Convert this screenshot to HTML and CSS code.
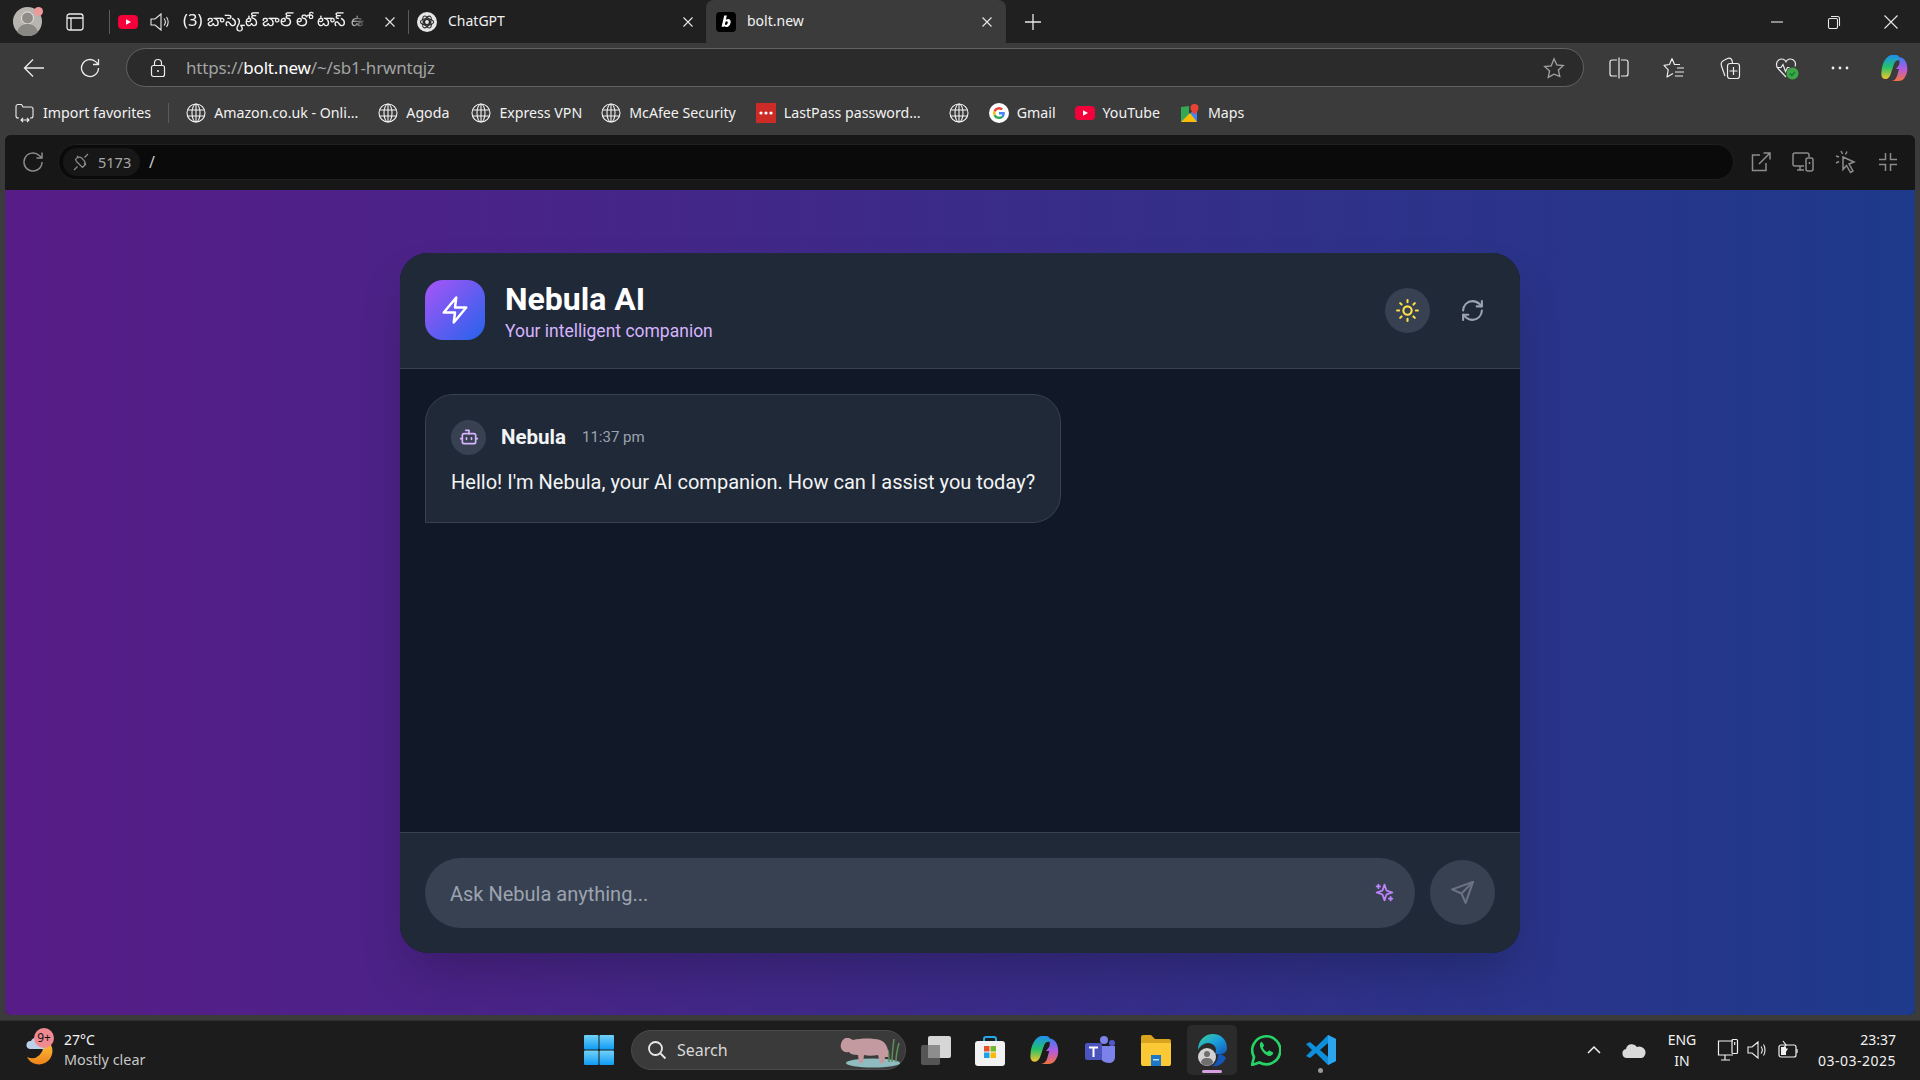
FILE: index.html
```html
<!DOCTYPE html>
<html lang="en">
<head>
<meta charset="utf-8">
<title>Nebula AI</title>
<link rel="stylesheet" href="styles.css">
</head>
<body>
<svg class="defs" width="0" height="0">
  <symbol id="globe" viewBox="0 0 20 20"><g fill="none" stroke="currentColor" stroke-width="1.1"><circle cx="10" cy="10" r="9"/><ellipse cx="10" cy="10" rx="4" ry="9"/><path d="M1.6 7h16.8M1.6 13h16.8M10 1v18"/></g></symbol>
  <symbol id="close" viewBox="0 0 12 12"><path d="M1.5 1.5l9 9M10.5 1.5l-9 9" stroke="currentColor" stroke-width="1.1" fill="none"/></symbol>
  <symbol id="yt" viewBox="0 0 20 14"><rect width="20" height="14" rx="4" fill="#f4003a"/><path d="M8 4.2l5 2.8-5 2.8z" fill="#fff"/></symbol>
  <defs>
    <linearGradient id="cp1" x1="0" y1="0" x2="0" y2="1"><stop offset="0" stop-color="#1d8ff0"/><stop offset=".5" stop-color="#23c16b"/><stop offset="1" stop-color="#f7c52c"/></linearGradient>
    <linearGradient id="cp2" x1="0" y1="0" x2="0" y2="1"><stop offset="0" stop-color="#3b7cf5"/><stop offset=".5" stop-color="#b45be0"/><stop offset="1" stop-color="#f4733d"/></linearGradient>
    <linearGradient id="edge" x1="0" y1="0" x2="1" y2="1"><stop offset="0" stop-color="#3ad48f"/><stop offset=".5" stop-color="#1a9fdd"/><stop offset="1" stop-color="#1457b8"/></linearGradient>
    <linearGradient id="winb" x1="0" y1="0" x2="0" y2="1"><stop offset="0" stop-color="#72d2f6"/><stop offset="1" stop-color="#0f9bf5"/></linearGradient>
    <linearGradient id="moon" x1="0" y1="0" x2="0" y2="1"><stop offset="0" stop-color="#fbc13f"/><stop offset="1" stop-color="#ee8217"/></linearGradient>
  </defs>
  <symbol id="copilot-shape" viewBox="0 0 28 28">
    <path d="M10 1h5c2 0 3 1 3.500 3l.5 2.500c-3-1-5 .5-6 3.500l-3 9c-1 4-3 6-5.500 6C1 25 0 22 .5 18 1 10 4 3 10 1z" fill="url(#cp1)"/>
    <path d="M17 3c4 0 7 2 8.500 6.500 1.500 5 1 10-1.500 13.500-1.500 3-4 4-7 4h-7c3 0 5-2 6-5l2-7h-3l3-4c1-3 .5-6-1-8z" fill="url(#cp2)"/>
  </symbol>
</svg>

<header class="tabstrip">
  <div class="avatar">
    <svg viewBox="0 0 29 29" width="29" height="29"><circle cx="14.5" cy="14.5" r="14.5" fill="#b8b5b0"/><circle cx="14.5" cy="11" r="6" fill="#8e8c89" stroke="#e6e4e0" stroke-width="1"/><path d="M4 25c2-6 6-8 10.500-8s8.500 2 10.500 8a14.500 14.500 0 0 1-21 0z" fill="#8a8885"/></svg>
    <span class="avatar-dot"></span>
  </div>
  <svg class="tabs-btn" viewBox="0 0 18 18" width="18" height="18" fill="none" stroke="#e8e8e8" stroke-width="1.3"><rect x="1" y="1" width="16" height="16" rx="2.500"/><path d="M1 5h16M5 5v12"/></svg>
  <span class="tab-div"></span>
  <div class="tab tab-yt">
    <svg width="20" height="14"><use href="#yt"/></svg>
    <svg class="speaker" viewBox="0 0 20 20" width="20" height="20" fill="none" stroke="#e8e8e8" stroke-width="1.100"><path d="M1 7h4l6-5v16l-6-5H1zM14 6.500c1.600 2 1.600 5 0 7M16.500 5c2 3 2 7 0 10"/></svg>
    <span class="tab-title telugu">(3) బాస్కెట్ బాల్ లో టాస్ ఉ</span>
    <svg class="tab-x" width="12" height="12"><use href="#close"/></svg>
  </div>
  <span class="tab-div tab-div-2"></span>
  <div class="tab tab-gpt">
    <svg viewBox="0 0 20 20" width="20" height="20"><circle cx="10" cy="10" r="10" fill="#e6e6e6"/><g fill="none" stroke="#222" stroke-width="1.100"><circle cx="10" cy="10" r="2.500"/><ellipse cx="10" cy="10" rx="6.500" ry="3.200"/><ellipse cx="10" cy="10" rx="6.500" ry="3.200" transform="rotate(60 10 10)"/><ellipse cx="10" cy="10" rx="6.500" ry="3.200" transform="rotate(120 10 10)"/></g></svg>
    <span class="tab-title">ChatGPT</span>
    <svg class="tab-x" width="12" height="12"><use href="#close"/></svg>
  </div>
  <div class="tab tab-active">
    <svg viewBox="0 0 20 20" width="20" height="20"><rect width="20" height="20" rx="4" fill="#000"/><path d="M8.200 3.500h2.600l-.9 4.300c.7-.5 1.400-.7 2.200-.7 1.900 0 2.900 1.400 2.500 3.700-.4 2.700-2 4.200-4.300 4.200-.9 0-1.700-.3-2.100-.9l-.2.700H5.600zM9.400 10l-.5 2.300c.2.400.7.600 1.100.6.900 0 1.500-.7 1.700-1.800.2-1.100-.2-1.800-1-1.800-.5 0-1 .3-1.300.7z" fill="#fff"/></svg>
    <span class="tab-title">bolt.new</span>
    <svg class="tab-x" width="12" height="12"><use href="#close"/></svg>
  </div>
  <svg class="new-tab" viewBox="0 0 18 18" width="18" height="18" stroke="#e8e8e8" stroke-width="1.300"><path d="M9 1v16M1 9h16"/></svg>
  <div class="win-controls">
    <svg viewBox="0 0 14 14" width="14" height="14" stroke="#e8e8e8" stroke-width="1.100"><path d="M1 7h12"/></svg>
    <svg viewBox="0 0 14 14" width="14" height="14" fill="none" stroke="#e8e8e8" stroke-width="1.100"><rect x="1.500" y="3.500" width="9" height="10" rx="1.500"/><path d="M4 1.500h6.500a2 2 0 0 1 2 2V11"/></svg>
    <svg viewBox="0 0 14 14" width="14" height="14" stroke="#e8e8e8" stroke-width="1.100"><path d="M.5.500l13 13M13.500.500l-13 13"/></svg>
  </div>
</header>

<nav class="toolbar">
  <svg class="tb-back" viewBox="0 0 22 20" width="22" height="20" fill="none" stroke="#ededed" stroke-width="1.300"><path d="M21 10H1.500M10 1.500L1.500 10l8.500 8.500"/></svg>
  <svg class="tb-reload" viewBox="0 0 20 20" width="20" height="20" fill="none" stroke="#ededed" stroke-width="1.300"><path d="M18.500 10a8.500 8.500 0 1 1-2.600-6.100L18.500 6.500M18.500 1v5.500H13"/></svg>
  <div class="urlbar">
    <svg viewBox="0 0 16 20" width="16" height="20" fill="none" stroke="#ededed" stroke-width="1.200"><rect x="1.500" y="7.500" width="13" height="11" rx="2"/><path d="M4.500 7.500V5a3.500 3.500 0 0 1 7 0v2.500"/><circle cx="8" cy="13" r="1" fill="#ededed" stroke="none"/></svg>
    <span class="url"><span class="url-dim">https://</span><span class="url-host">bolt.new</span><span class="url-dim">/~/sb1-hrwntqjz</span></span>
    <svg class="url-star" viewBox="0 0 22 22" width="22" height="22" fill="none" stroke="#a0a0a0" stroke-width="1.300"><path d="M11 1.800l2.800 6 6.500.7-4.900 4.400 1.400 6.500L11 17.100l-5.800 3.300 1.400-6.500-4.900-4.400 6.500-.7z"/></svg>
  </div>
  <div class="tb-actions">
    <svg viewBox="0 0 20 22" width="20" height="22" fill="none" stroke="#ededed" stroke-width="1.200"><path d="M10 .5v21M8 3H3a2 2 0 0 0-2 2v12a2 2 0 0 0 2 2h5M12 3h5a2 2 0 0 1 2 2v12a2 2 0 0 1-2 2h-5"/></svg>
    <svg viewBox="0 0 22 22" width="22" height="22" fill="none" stroke="#ededed" stroke-width="1.200" stroke-linejoin="round"><path d="M9 1.500L11.500 7.500H17M6.500 7.500L1 8.300l4.200 4.500L4 20l6-3.500M9 1.500L6.500 7.500M14 11h7M12 15h9M12 19h8"/></svg>
    <svg viewBox="0 0 22 24" width="22" height="24" fill="none" stroke="#ededed" stroke-width="1.200"><path d="M6 20L2.500 10c-1-3 .5-5 3-6l3-1.500c2-1 4 0 4.500 2L13.500 7"/><rect x="8.500" y="7.500" width="12" height="15" rx="2.500"/><path d="M14.500 11v8M10.500 15h8"/></svg>
    <svg viewBox="0 0 24 24" width="24" height="24" fill="none"><path d="M11 21L3.500 13C.5 10 1 5.500 4 3.800 7 2 9.800 3.500 11 5.800 12.200 3.500 15 2 18 3.800c2.500 1.500 3 4 2 6.700M1.500 11.500h4.500l2-3 2.500 7 2-4h2" stroke="#ededed" stroke-width="1.200"/><circle cx="17.500" cy="17.500" r="6" fill="#3fa648"/><path d="M14.800 17.500l2 2 3.200-3.600" stroke="#173" stroke-width="1.300"/></svg>
    <svg class="tb-dots" viewBox="0 0 20 6" width="20" height="6" fill="#ededed"><circle cx="3" cy="3" r="1.400"/><circle cx="10" cy="3" r="1.400"/><circle cx="17" cy="3" r="1.400"/></svg>
    <svg class="copilot" viewBox="0 0 28 28" width="28" height="28"><use href="#copilot-shape"/></svg>
  </div>
</nav>

<div class="bookmarks">
  <div class="bm bm-import">
    <svg viewBox="0 0 20 20" width="20" height="20" fill="none" stroke="#ededed" stroke-width="1.100"><path d="M4 15H3a2 2 0 0 1-2-2V3.500A2 2 0 0 1 3 1.500h3.500L8 4h8a2 2 0 0 1 2 2v7a2 2 0 0 1-2 2h-1M6 17h8M8 15l-2 2 2 2M12 15l2 2-2 2"/></svg>
    <span>Import favorites</span>
  </div>
  <span class="bm-sep"></span>
  <div class="bm bm-amazon"><svg width="20" height="20"><use href="#globe"/></svg><span>Amazon.co.uk - Onli...</span></div>
  <div class="bm bm-agoda"><svg width="20" height="20"><use href="#globe"/></svg><span>Agoda</span></div>
  <div class="bm bm-vpn"><svg width="20" height="20"><use href="#globe"/></svg><span>Express VPN</span></div>
  <div class="bm bm-mcafee"><svg width="20" height="20"><use href="#globe"/></svg><span>McAfee Security</span></div>
  <div class="bm bm-lastpass"><svg viewBox="0 0 20 20" width="20" height="20"><rect width="20" height="20" fill="#cc2b26"/><g fill="#fff"><circle cx="5" cy="10" r="1.600"/><circle cx="10" cy="10" r="1.600"/><circle cx="15" cy="10" r="1.600"/></g></svg><span>LastPass password...</span></div>
  <div class="bm bm-blank"><svg width="20" height="20"><use href="#globe"/></svg></div>
  <div class="bm bm-gmail"><svg viewBox="0 0 20 20" width="20" height="20"><circle cx="10" cy="10" r="10" fill="#fff"/><path d="M15.800 10.200c0-.5 0-.9-.1-1.300H10v2.500h3.300a2.800 2.800 0 0 1-1.200 1.800l1.900 1.500c1.100-1 1.800-2.600 1.800-4.500z" fill="#4285f4"/><path d="M10 16c1.600 0 3-.5 4-1.500l-1.900-1.500c-.5.400-1.200.6-2.100.6-1.600 0-2.900-1-3.400-2.400l-2 1.500A6 6 0 0 0 10 16z" fill="#34a853"/><path d="M6.600 11.200a3.600 3.600 0 0 1 0-2.300l-2-1.500a6 6 0 0 0 0 5.300z" fill="#fbbc05"/><path d="M10 6.400c.9 0 1.700.3 2.300.9l1.700-1.700A6 6 0 0 0 4.600 7.400l2 1.500C7.100 7.500 8.400 6.400 10 6.400z" fill="#ea4335"/></svg><span>Gmail</span></div>
  <div class="bm bm-youtube"><svg width="20" height="14"><use href="#yt"/></svg><span>YouTube</span></div>
  <div class="bm bm-maps"><svg viewBox="0 0 20 20" width="20" height="20"><path d="M1 4l8-1v16H1z" fill="#34a853"/><path d="M1 19L17 4v15z" fill="#4285f4"/><path d="M1 19L10 10l7 9z" fill="#fbbc05"/><path d="M14.500 1a4 4 0 0 0-4 4c0 3 4 6.500 4 6.500s4-3.500 4-6.500a4 4 0 0 0-4-4z" fill="#ea4335"/></svg><span>Maps</span></div>
</div>

<div class="workspace">
  <div class="panel">
    <div class="panel-bar">
      <svg class="pb-reload" viewBox="0 0 22 22" width="22" height="22" fill="none" stroke="#8c8c8c" stroke-width="1.500"><path d="M20 11a9 9 0 1 1-2.800-6.500L20 7M20 1.500V7h-5.500"/></svg>
      <div class="pb-address">
        <div class="pb-port">
          <svg viewBox="0 0 16 18" width="16" height="18" fill="none" stroke="#8c8c8c" stroke-width="1.200"><path d="M1 17l3.500-3.500M15 1l-3.500 3.500M3.500 8.500l6 6 1.500-1.500c1.500-1.500 1.500-3.500.5-5L8.500 4.800c-1.500-1-3.500-1-5 .5L2.500 6.500zM6 5l-2-2M13 12l-2-2"/></svg>
          <span>5173</span>
        </div>
        <span class="pb-path">/</span>
      </div>
      <div class="pb-actions">
        <svg viewBox="0 0 20 20" width="20" height="20" fill="none" stroke="#8c8c8c" stroke-width="1.500"><path d="M9 3H1.500v15.500H15V11M8 12L19 1M12.500 1H19v6.500"/></svg>
        <svg viewBox="0 0 22 20" width="22" height="20" fill="none" stroke="#8c8c8c" stroke-width="1.500"><path d="M12 14H3a2 2 0 0 1-2-2V3a2 2 0 0 1 2-2h12a2 2 0 0 1 2 2v2M5 18h7M8 14v4"/><rect x="14" y="6" width="7" height="13" rx="2"/><path d="M17.500 10v2"/></svg>
        <svg viewBox="0 0 22 24" width="22" height="24" fill="none" stroke="#8c8c8c" stroke-width="1.500"><path d="M8 7l11 5-5 2 4 7-2.500 1.500-4-7-3.500 4zM6 1l1.500 3M1 6l3 1M12 1.500l-1.500 3M1 13l3-1.500"/></svg>
        <svg viewBox="0 0 20 20" width="20" height="20" fill="none" stroke="#8c8c8c" stroke-width="1.500"><path d="M7.500 1v6.500H1M12.500 1v6.500H19M7.500 19v-6.500H1M12.500 19v-6.500H19"/></svg>
      </div>
    </div>

    <main class="preview">
      <section class="card">
        <header class="card-head">
          <div class="logo">
            <svg viewBox="0 0 24 24" width="30" height="30" fill="none" stroke="#fff" stroke-width="2" stroke-linecap="round" stroke-linejoin="round"><polygon points="13 2 3 14 12 14 11 22 21 10 12 10 13 2"/></svg>
          </div>
          <div class="brand">
            <h1>Nebula AI</h1>
            <p>Your intelligent companion</p>
          </div>
          <div class="head-actions">
            <button class="icon-btn theme-btn" type="button" aria-label="Theme">
              <svg viewBox="0 0 24 24" width="25" height="25" fill="none" stroke="#fde047" stroke-width="2" stroke-linecap="round"><circle cx="12" cy="12" r="4"/><path d="M12 2v2M12 20v2M4.930 4.930l1.410 1.410M17.660 17.660l1.410 1.410M2 12h2M20 12h2M6.340 17.660l-1.410 1.410M19.070 4.930l-1.410 1.410"/></svg>
            </button>
            <button class="icon-btn" type="button" aria-label="Reset">
              <svg viewBox="0 0 24 24" width="25" height="25" fill="none" stroke="#9ca3af" stroke-width="2" stroke-linecap="round" stroke-linejoin="round"><path d="M3 12a9 9 0 0 1 9-9 9.750 9.750 0 0 1 6.740 2.740L21 8"/><path d="M21 3v5h-5"/><path d="M21 12a9 9 0 0 1-9 9 9.750 9.750 0 0 1-6.740-2.740L3 16"/><path d="M8 16H3v5"/></svg>
            </button>
          </div>
        </header>

        <div class="messages">
          <article class="bubble">
            <div class="bubble-head">
              <span class="bot-avatar">
                <svg viewBox="0 0 24 24" width="20" height="20" fill="none" stroke="#d8b4fe" stroke-width="2" stroke-linecap="round" stroke-linejoin="round"><path d="M12 8V4H8"/><rect x="4" y="8" width="16" height="12" rx="2"/><path d="M2 14h2M20 14h2M15 13v2M9 13v2"/></svg>
              </span>
              <strong class="bot-name">Nebula</strong>
              <time class="bot-time">11:37 pm</time>
            </div>
            <p class="bubble-text">Hello! I'm Nebula, your AI companion. How can I assist you today?</p>
          </article>
        </div>

        <footer class="composer">
          <div class="prompt">
            <input class="prompt-input" type="text" placeholder="Ask Nebula anything...">
            <svg viewBox="0 0 24 24" width="21" height="21" fill="none" stroke="#c084fc" stroke-width="2" stroke-linecap="round" stroke-linejoin="round"><path d="m12 3-1.912 5.813a2 2 0 0 1-1.275 1.275L3 12l5.813 1.912a2 2 0 0 1 1.275 1.275L12 21l1.912-5.813a2 2 0 0 1 1.275-1.275L21 12l-5.813-1.912a2 2 0 0 1-1.275-1.275L12 3Z"/><path d="M5 3v4M19 17v4M3 5h4M17 19h4"/></svg>
          </div>
          <button class="send-btn" type="button" aria-label="Send">
            <svg viewBox="0 0 24 24" width="25" height="25" fill="none" stroke="#6b7280" stroke-width="2" stroke-linecap="round" stroke-linejoin="round"><path d="m22 2-7 20-4-9-9-4Z"/><path d="M22 2 11 13"/></svg>
          </button>
        </footer>
      </section>
    </main>
  </div>
</div>

<footer class="taskbar">
  <div class="weather">
    <div class="weather-icon">
      <svg viewBox="0 0 30 32" width="30" height="32"><path d="M17 9a11 11 0 0 1-15 14 13 13 0 0 0 24-12 10 10 0 0 0-9-2z" fill="url(#moon)"/><path d="M5 15a4 4 0 0 1 1-8 6 6 0 0 1 11 0 4 4 0 0 1 1 8z" fill="#bcd0ea"/></svg>
      <span class="badge">9+</span>
    </div>
    <div class="weather-text"><span>27°C</span><span class="weather-sub">Mostly clear</span></div>
  </div>
  <svg class="start" viewBox="0 0 30 30" width="30" height="30"><g fill="url(#winb)"><rect width="14.500" height="14.500" rx="1"/><rect x="15.500" width="14.500" height="14.500" rx="1"/><rect y="15.500" width="14.500" height="14.500" rx="1"/><rect x="15.500" y="15.500" width="14.500" height="14.500" rx="1"/></g></svg>
  <div class="search">
    <svg viewBox="0 0 20 20" width="20" height="20" fill="none" stroke="#e8e8e8" stroke-width="1.800"><circle cx="8.500" cy="8.500" r="6.500"/><path d="M13.500 13.500l5 5"/></svg>
    <span>Search</span>
    <svg class="hippo" viewBox="0 0 62 36" width="62" height="36"><ellipse cx="34" cy="31" rx="27" ry="4.500" fill="#8fbcc0"/><path d="M53 30c0-8 1-15 2-23M57 30c0-6 1-12 3-19M50 30c0-4 0-8-1-12" stroke="#5f8f5a" stroke-width="1.500" fill="none"/><path d="M10 6l4 2c8-2 20-2 27 0 6 2 9 8 8 17h-3l-1 6h-4l-2-8c-5 1-10 1-14 0l-1 8h-4l-1-8c-5 0-8-1-9-3-4 1-7-1-8-4-1-4 1-9 5-10z" fill="#c39aa0"/></svg>
  </div>
  <div class="tray-apps">
    <svg class="app-task" viewBox="0 0 32 32" width="32" height="32"><rect x="1" y="11" width="19" height="20" rx="2" fill="#555"/><rect x="8" y="2" width="23" height="22" rx="2" fill="#d6d6d6"/><rect x="8" y="11" width="12" height="13" fill="#8d8d8d"/></svg>
    <svg class="app" viewBox="0 0 30 32" width="30" height="32"><path d="M9 8V5a2 2 0 0 1 2-2h8a2 2 0 0 1 2 2v3" fill="none" stroke="#25a7ee" stroke-width="2"/><rect y="7" width="30" height="25" rx="3" fill="#f2f2f2"/><rect x="9" y="12" width="5.500" height="5.500" fill="#e8502c"/><rect x="15.500" y="12" width="5.500" height="5.500" fill="#72b82a"/><rect x="9" y="18.500" width="5.500" height="5.500" fill="#1ba1e8"/><rect x="15.500" y="18.500" width="5.500" height="5.500" fill="#fbb805"/></svg>
    <svg class="app" viewBox="0 0 28 28" width="30" height="30"><use href="#copilot-shape"/></svg>
    <svg class="app" viewBox="0 0 30 32" width="30" height="32"><circle cx="19" cy="6" r="4" fill="#7b83eb"/><circle cx="27" cy="9" r="3" fill="#5059c9"/><path d="M15 12h15v11c0 4-3 6-6 6-5 0-9-3-9-8z" fill="#7b83eb"/><rect y="9" width="17" height="17" rx="2" fill="#4b53bc"/><path d="M4 12.500h9v2H9.500V23h-2v-8.500H4z" fill="#fff"/></svg>
    <svg class="app" viewBox="0 0 32 32" width="32" height="32"><path d="M1 3a2 2 0 0 1 2-2h8l4 4h14a2 2 0 0 1 2 2v4H1z" fill="#d9a41d"/><path d="M1 9h30v21a2 2 0 0 1-2 2H3a2 2 0 0 1-2-2z" fill="#fbc935"/><rect x="11" y="21" width="10" height="11" fill="#1d77c8"/><rect x="13" y="25" width="6" height="1.500" fill="#bfe0f5"/></svg>
    <div class="app-active">
      <svg viewBox="0 0 32 34" width="32" height="34"><path d="M2 17C2 7 9 1 17 1c8 0 14 6 14 14 0 4-3 6-7 6h-5c3-6-1-11-7-11-4 0-8 3-10 7z" fill="url(#edge)"/><path d="M22 21c1 5-3 11-6 12 6 1 11-2 14-8-2-3-5-4-8-4z" fill="#1457b8"/><circle cx="11" cy="24" r="9" fill="#d2d2d2"/><circle cx="11" cy="21" r="3" fill="#6f6f6f"/><path d="M5 30c0-4 3-5 6-5s6 1 6 5a8 8 0 0 1-12 0z" fill="#6f6f6f"/></svg>
      <span class="active-bar"></span>
    </div>
    <svg class="app" viewBox="0 0 30 32" width="30" height="32"><path d="M1 31l2-8A14 14 0 1 1 8.500 28.500z" fill="none" stroke="#25d366" stroke-width="2.600"/><path d="M10 8c-2 2-1.500 6 2 10 3 3.500 6.500 5 9 3 1-.8 1.500-2 1-2.500l-3.500-2c-.5-.2-1 0-1.500 1-.5.6-1 .6-2 0-1.500-1-2.500-2.500-3-3.500-.3-.8.300-1.200 1-2 .3-.5.200-1-2-4-.3-.4-1-.4-1 .5z" fill="#25d366"/></svg>
    <div class="app-vs">
      <svg viewBox="0 0 30 32" width="30" height="32"><path d="M22 1l8 4v22l-8 4-12-12-6 5-4-2 6-6-6-6 4-2 6 5z" fill="#0e8fdc"/><path d="M22 9l-8 7 8 7z" fill="#1c1c1c"/><path d="M22 1l8 4v22l-8 4z" fill="#2aa5ee"/></svg>
      <span class="vs-dot"></span>
    </div>
  </div>
  <div class="systray">
    <svg viewBox="0 0 16 10" width="16" height="10" fill="none" stroke="#f0f0f0" stroke-width="1.500"><path d="M2 8l6-6 6 6"/></svg>
    <svg class="tray-cloud" viewBox="0 0 24 18" width="24" height="18" fill="#dadada"><path d="M5 17a4.500 4.500 0 0 1-1-8.900 6 6 0 0 1 11-2A5 5 0 0 1 20 17z"/></svg>
    <div class="lang"><span>ENG</span><span>IN</span></div>
    <svg class="tray-net" viewBox="0 0 22 24" width="22" height="24" fill="none" stroke="#f0f0f0" stroke-width="1.200"><path d="M16 3H1.500v14H16M8 17v5M4 22h9"/><rect x="15" y="1.500" width="5.500" height="14" rx="1"/><path d="M17.700 4v3"/></svg>
    <svg class="tray-sound" viewBox="0 0 20 20" width="20" height="20" fill="none" stroke="#f0f0f0" stroke-width="1.100"><path d="M1 7h4l6-5v16l-6-5H1zM14 6.500c1.500 2 1.500 5 0 7M16.500 4.500c2 3 2 8 0 11"/></svg>
    <svg class="tray-batt" viewBox="0 0 22 20" width="22" height="20" fill="none" stroke="#f0f0f0" stroke-width="1.200"><rect x="1" y="5" width="17" height="12" rx="2"/><path d="M19 9v4M5 1l3 4-3 4h4l-3 5"/><rect x="3" y="7" width="5" height="8" fill="#f0f0f0" stroke="none"/></svg>
    <div class="clock"><span>23:37</span><span class="clock-date">03-03-2025</span></div>
  </div>
</footer>
</body>
</html>
```
FILE: styles.css
```css
* { box-sizing: border-box; }
html, body { margin: 0; padding: 0; }
body {
  width: 1920px;
  height: 1080px;
  overflow: hidden;
  display: flex;
  flex-direction: column;
  background: #3b3b3b;
  font-family: "Noto Sans", "Open Sans", sans-serif;
  color: #f2f2f2;
}
.defs { position: absolute; }
svg { display: block; flex: none; }
h1, p { margin: 0; }

/* Tab strip */
.tabstrip {
  height: 43px;
  background: #202020;
  display: flex;
  align-items: center;
  padding-left: 13px;
  flex: none;
}
.avatar { position: relative; width: 29px; height: 29px; }
.avatar-dot {
  position: absolute;
  top: 0; right: -1px;
  width: 9px; height: 9px;
  border-radius: 50%;
  background: #ee9a9a;
}
.tabs-btn { margin-left: 24px; }
.tab-div { width: 1px; height: 24px; background: #5a5a5a; margin-left: 25px; }
.tab-div-2 { margin-left: 12px; }
.tab {
  height: 43px;
  display: flex;
  align-items: center;
  font-size: 14px;
  position: relative;
}
.tab-title { white-space: nowrap; overflow: hidden; margin-bottom: 2px; }
.tab-x { color: #e8e8e8; flex: none; }
.tab-yt { width: 278px; margin-left: 8px; }
.speaker { margin-left: 12px; }
.telugu {
  width: 185px;
  margin-left: 13px;
  margin-right: 16px;
  font-size: 16.5px;
  -webkit-mask-image: linear-gradient(to right, #000 88%, transparent);
  mask-image: linear-gradient(to right, #000 88%, transparent);
}
.tab-gpt { width: 289px; margin-left: 8px; }
.tab-gpt .tab-title { margin-left: 11px; width: 234px; }
.tab-active {
  width: 300px;
  padding-left: 10px;
  background: #3b3b3b;
  border-radius: 8px 8px 0 0;
}
.tab-active .tab-title { margin-left: 11px; width: 234px; }
.new-tab { margin-left: 18px; }
.win-controls {
  margin-left: auto;
  padding-right: 22px;
  display: flex;
  gap: 43px;
  align-items: center;
}

/* Toolbar */
.toolbar {
  height: 49px;
  flex: none;
  display: flex;
  align-items: center;
  padding-left: 23px;
}
.tb-reload { margin-left: 35px; }
.urlbar {
  margin-left: 26px;
  width: 1458px;
  height: 39px;
  background: #2b2b2b;
  border: 1px solid #626262;
  border-radius: 20px;
  display: flex;
  align-items: center;
  padding-left: 23px;
  padding-right: 18px;
}
.url { margin-left: 20px; font-size: 17px; letter-spacing: -.17px; white-space: nowrap; }
.url-dim { color: #a2a2a2; }
.url-host { color: #fff; }
.url-star { margin-left: auto; }
.tb-actions {
  margin-left: 25px;
  display: flex;
  align-items: center;
  gap: 34px;
}
.tb-dots { margin-left: -3px; }
.copilot { margin-left: -3px; }

/* Bookmarks */
.bookmarks {
  height: 43px;
  flex: none;
  display: flex;
  align-items: center;
  padding: 0 0 2px 15px;
  font-size: 14.2px;
}
.bm { display: flex; align-items: center; gap: 8px; white-space: nowrap; }
.bm-sep { width: 1px; height: 20px; background: #5a5a5a; margin-left: 17px; }
.bm-amazon { margin-left: 17px; }
.bm-agoda { margin-left: 20px; }
.bm-vpn { margin-left: 22px; }
.bm-mcafee { margin-left: 19px; }
.bm-lastpass { margin-left: 20px; }
.bm-blank { margin-left: 28px; }
.bm-gmail { margin-left: 20px; }
.bm-youtube { margin-left: 19px; }
.bm-maps { margin-left: 20px; }

/* Workspace */
.workspace {
  flex: 1;
  min-height: 0;
  padding: 0 5px 5px;
  display: flex;
}
.panel {
  flex: 1;
  display: flex;
  flex-direction: column;
  border-radius: 6px;
  overflow: hidden;
  background: #171717;
}
.panel-bar {
  height: 55px;
  flex: none;
  display: flex;
  align-items: center;
  padding: 0 0 1px 17px;
  background: #171717;
}
.pb-address {
  margin-left: 14px;
  width: 1676px;
  height: 36px;
  background: #0a0a0a;
  border: 1px solid #202020;
  border-radius: 18px;
  display: flex;
  align-items: center;
  padding-left: 4px;
}
.pb-port {
  height: 28px;
  width: 77px;
  border-radius: 14px;
  background: #171717;
  display: flex;
  align-items: center;
  gap: 9px;
  padding-left: 10px;
  color: #a8a8a8;
  font-size: 14.5px;
}
.pb-path { margin-left: 9px; color: #c8c8c8; font-size: 16px; }
.pb-actions {
  margin-left: 17px;
  display: flex;
  align-items: center;
  gap: 21px;
}

/* Preview */
.preview {
  flex: 1;
  min-height: 0;
  display: flex;
  align-items: center;
  justify-content: center;
  background: linear-gradient(to right, #581c87, #1e3a8a);
}
.card {
  width: 1120px;
  height: 700px;
  border-radius: 28px;
  overflow: hidden;
  display: flex;
  flex-direction: column;
  background: #111827;
  box-shadow: 0 25px 50px -12px rgba(0, 0, 0, .25);
  font-family: Roboto, "Noto Sans", sans-serif;
}
.card-head {
  height: 116px;
  flex: none;
  display: flex;
  align-items: center;
  gap: 20px;
  padding: 0 25px;
  background: #1f2937;
  border-bottom: 1px solid #374151;
}
.logo {
  width: 60px; height: 60px;
  border-radius: 18px;
  background: linear-gradient(135deg, #a855f7, #2563eb);
  display: flex;
  align-items: center;
  justify-content: center;
}
.brand { padding-top: 6px; }
.brand h1 { font-size: 32px; line-height: 36px; font-weight: 700; color: #fff; }
.brand p { font-size: 17.5px; line-height: 28px; color: #d8b4fe; }
.head-actions { margin-left: auto; display: flex; gap: 20px; }
.icon-btn {
  width: 45px; height: 45px;
  border: 0; padding: 0;
  border-radius: 50%;
  background: transparent;
  display: flex;
  align-items: center;
  justify-content: center;
}
.theme-btn { background: #374151; }
.messages { flex: 1; min-height: 0; padding: 25px; background: #111827; }
.bubble {
  width: fit-content;
  padding: 25px;
  background: #1f2937;
  border: 1px solid #374151;
  border-radius: 28px 28px 28px 0;
}
.bubble-head { display: flex; align-items: center; }
.bot-avatar {
  width: 35px; height: 35px;
  border-radius: 50%;
  background: #374151;
  display: flex;
  align-items: center;
  justify-content: center;
}
.bot-name { margin-left: 15px; font-size: 20.5px; font-weight: 700; color: #f3f4f6; }
.bot-time { margin-left: 16px; font-size: 15px; color: #9ca3af; }
.bubble-text { margin-top: 12px; font-size: 20.05px; line-height: 30px; color: #f3f4f6; white-space: nowrap; }
.composer {
  height: 121px;
  flex: none;
  display: flex;
  align-items: center;
  gap: 15px;
  padding: 0 25px;
  background: #1f2937;
  border-top: 1px solid #374151;
}
.prompt {
  flex: 1;
  height: 70px;
  border-radius: 35px;
  background: #374151;
  display: flex;
  align-items: center;
  padding: 0 20px 0 25px;
}
.prompt-input {
  flex: 1;
  min-width: 0;
  border: 0;
  outline: 0;
  padding: 3px 0 0;
  background: transparent;
  font: inherit;
  font-size: 20px;
  color: #f3f4f6;
}
.prompt-input::placeholder { color: #9ca3af; opacity: 1; }
.send-btn {
  width: 65px; height: 65px;
  flex: none;
  border: 0; padding: 0;
  border-radius: 50%;
  background: #374151;
  display: flex;
  align-items: center;
  justify-content: center;
}

/* Taskbar */
.taskbar {
  height: 60px;
  flex: none;
  display: flex;
  align-items: center;
  padding: 0 0 1px 25px;
  background: #1c1c1c;
  border-top: 1px solid #2e2e2e;
  font-size: 14px;
}
.weather { display: flex; align-items: center; width: 559px; gap: 9px; }
.weather-icon { position: relative; width: 30px; height: 32px; }
.badge {
  position: absolute;
  top: -6px; left: 9px;
  width: 20px; height: 20px;
  border-radius: 50%;
  background: #f08a90;
  color: #111;
  font-size: 12px;
  line-height: 20px;
  text-align: center;
}
.weather-text { display: flex; flex-direction: column; line-height: 20px; }
.weather-sub { color: #c8c8c8; font-size: 14.4px; }
.search {
  margin-left: 17px;
  width: 275px;
  height: 40px;
  border-radius: 20px;
  background: #3a3a3a;
  border: 1px solid #4a4a4a;
  display: flex;
  align-items: center;
  padding-left: 15px;
  gap: 10px;
  font-size: 16px;
  color: #d8d8d8;
}
.hippo { margin-left: auto; margin-right: 4px; }
.tray-apps { margin-left: 14px; display: flex; align-items: center; gap: 25px; }
.app-task { margin-right: -2px; }
.app-active {
  position: relative;
  width: 50px; height: 50px;
  margin: 0 -10.500px;
  border-radius: 5px;
  background: #2b2b2b;
  display: flex;
  align-items: center;
  justify-content: center;
}
.active-bar {
  position: absolute;
  bottom: 2px; left: 15px;
  width: 20px; height: 3px;
  border-radius: 2px;
  background: #d8a0e0;
}
.app-vs { position: relative; }
.vs-dot {
  position: absolute;
  left: 12px; bottom: -7px;
  width: 5px; height: 5px;
  border-radius: 50%;
  background: #9a9a9a;
}
.systray {
  margin-left: auto;
  padding-right: 24px;
  display: flex;
  align-items: center;
}
.tray-cloud { margin-left: 20px; }
.lang { margin-left: 20px; width: 32px; }
.tray-net { margin-left: 19px; }
.tray-sound { margin-left: 8px; }
.tray-batt { margin-left: 11px; }
.lang, .clock { display: flex; flex-direction: column; line-height: 21px; }
.lang { align-items: center; }
.clock { align-items: flex-end; margin-left: 18px; width: 78px; white-space: nowrap; }
.clock-date { letter-spacing: .5px; }
```
